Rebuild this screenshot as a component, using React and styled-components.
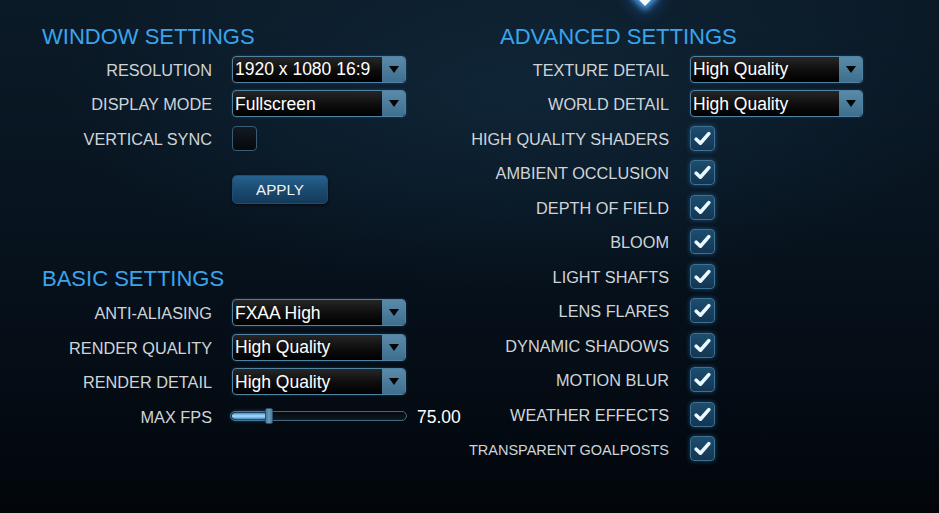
import React from 'react';
import styled, { createGlobalStyle } from 'styled-components';

const GlobalStyle = createGlobalStyle`
	html, body {
		margin: 0;
		padding: 0;
		background: #03080d;
	}
	* {
		box-sizing: border-box;
	}
`;

// Whole settings screen
const Page = styled.div`
	position: relative;
	width: 939px;
	height: 513px;
	overflow: hidden;
	display: flex;
	padding-top: 23px;
	font-family: 'Liberation Sans', Arial, sans-serif;
	background:
		radial-gradient(ellipse 70% 55% at 55% 18%, rgba(20, 48, 70, 0.55), rgba(20, 48, 70, 0) 70%),
		linear-gradient(180deg, #0b1a27 0%, #081521 35%, #050d16 70%, #02060b 100%);
`;

// Glowing tip of the tab marker at the top
const TabGlow = styled.div`
	position: absolute;
	left: 638px;
	top: -11px;
	width: 14px;
	height: 14px;
	transform: rotate(45deg);
	background: #f4fbff;
	box-shadow: 0 0 6px 3px rgba(90, 180, 255, 0.85), 0 0 16px 6px rgba(40, 120, 220, 0.45);
`;

const Column = styled.div`
	display: flex;
	flex-direction: column;
	flex: none;
	width: ${props => props.width}px;
	margin-left: ${props => props.offset}px;
`;

const Header = styled.h2`
	margin: ${props => props.top || 0}px 0 ${props => props.bottom || 0}px ${props => props.indent || 0}px;
	height: 24px;
	line-height: 24px;
	padding-top: 2px;
	font-size: 22px;
	font-weight: 400;
	color: #3aa4ee;
	white-space: nowrap;
`;

const Row = styled.div`
	display: flex;
	align-items: center;
	height: 34.5px;
	gap: ${props => props.gap}px;
`;

const Label = styled.div`
	flex: none;
	width: ${props => props.width}px;
	display: flex;
	justify-content: flex-end;
	padding-top: 2px;
	white-space: nowrap;
	font-size: ${props => (props.small ? '14.5px' : '16.3px')};
	color: #cfd4d8;
`;

// Dropdown
const Select = styled.div`
	display: flex;
	width: ${props => props.width}px;
	height: 27px;
	border: 1px solid #5282a2;
	border-radius: 4px;
	overflow: hidden;
	background: linear-gradient(180deg, #262626 0%, #0d0d0d 55%, #000 100%);
	box-shadow: 0 0 3px rgba(60, 130, 190, 0.35);
`;

const SelectValue = styled.div`
	flex: 1;
	display: flex;
	align-items: center;
	padding: 1px 0 0 2px;
	font-size: 17.5px;
	color: #ffffff;
	white-space: nowrap;
	overflow: hidden;
`;

const SelectArrow = styled.div`
	flex: none;
	width: 23px;
	display: flex;
	align-items: center;
	justify-content: center;
	background: linear-gradient(180deg, #5a8aaa 0%, #4c7d9d 50%, #3f6e8e 100%);
	&::after {
		content: '';
		width: 0;
		height: 0;
		border-left: 5px solid transparent;
		border-right: 5px solid transparent;
		border-top: 7px solid #050505;
	}
`;

// Checkbox
const Box = styled.div`
	width: 25px;
	height: 25px;
	display: flex;
	align-items: center;
	justify-content: center;
	border-radius: 4px;
	border: 1.5px solid ${props => (props.checked ? '#3f7192' : '#3a5c74')};
	background: ${props =>
		props.checked
			? 'linear-gradient(180deg, #1d4d6e 0%, #133652 100%)'
			: 'linear-gradient(180deg, #121a22 0%, #06090d 100%)'};
	box-shadow: ${props => (props.checked ? '0 0 5px rgba(50, 150, 230, 0.45)' : 'none')};
`;

const ApplyButton = styled.button`
	margin: 19.5px 0 0 190px;
	width: 96px;
	height: 29px;
	border: 1px solid #1d4e74;
	border-radius: 5px;
	background: linear-gradient(180deg, #26628f 0%, #1b4b70 50%, #143a5b 100%);
	color: #eef3f6;
	font-family: 'Liberation Sans', Arial, sans-serif;
	font-size: 15.2px;
	padding: 0 0 1px;
	box-shadow: 0 1px 3px rgba(0, 0, 0, 0.6);
`;

// Slider
const SliderWrap = styled.div`
	display: flex;
	align-items: center;
	margin-left: -2px;
`;

const Track = styled.div`
	position: relative;
	width: 177px;
	height: 10px;
	border-radius: 5px;
	border: 1px solid #44697f;
	background: linear-gradient(180deg, #050a0f 0%, #0f1a22 100%);
`;

const Fill = styled.div`
	position: absolute;
	left: 1px;
	top: 1px;
	bottom: 1px;
	border-radius: 4px;
	background: linear-gradient(180deg, #4a90c0 0%, #a8dcff 50%, #4a90c0 100%);
	box-shadow: 0 0 5px rgba(90, 180, 255, 0.8);
`;

const Thumb = styled.div`
	position: absolute;
	top: -4px;
	width: 8px;
	height: 16px;
	border-radius: 2px;
	background: linear-gradient(90deg, #4a7c9c 0%, #6b9aba 50%, #4a7c9c 100%);
	border: 1px solid #2e5068;
`;

const SliderValue = styled.div`
	margin-left: 10px;
	padding-top: 2px;
	font-size: 17.5px;
	color: #ffffff;
	white-space: nowrap;
`;

const Dropdown = ({ value, width }) => (
	<Select width={width}>
		<SelectValue>{value}</SelectValue>
		<SelectArrow />
	</Select>
);

const Checkbox = ({ checked }) => (
	<Box checked={checked}>
		{checked && (
			<svg width="17" height="15" viewBox="0 0 17 15">
				<path
					d="M2.2 8.2 L6.4 12.2 L14.8 2.6"
					fill="none"
					stroke="#eaf8ff"
					strokeWidth="3.6"
					strokeLinecap="round"
					strokeLinejoin="round"
				/>
			</svg>
		)}
	</Box>
);

const Slider = ({ value, percent }) => (
	<SliderWrap>
		<Track>
			<Fill style={{ width: `${percent}%` }} />
			<Thumb style={{ left: `calc(${percent}% - 1px)` }} />
		</Track>
		<SliderValue>{value.toFixed(2)}</SliderValue>
	</SliderWrap>
);

const windowRows = [
	{ label: 'RESOLUTION', type: 'select', value: '1920 x 1080 16:9' },
	{ label: 'DISPLAY MODE', type: 'select', value: 'Fullscreen' },
	{ label: 'VERTICAL SYNC', type: 'check', value: false },
];

const basicRows = [
	{ label: 'ANTI-ALIASING', type: 'select', value: 'FXAA High' },
	{ label: 'RENDER QUALITY', type: 'select', value: 'High Quality' },
	{ label: 'RENDER DETAIL', type: 'select', value: 'High Quality' },
];

const advancedRows = [
	{ label: 'TEXTURE DETAIL', type: 'select', value: 'High Quality' },
	{ label: 'WORLD DETAIL', type: 'select', value: 'High Quality' },
	{ label: 'HIGH QUALITY SHADERS', type: 'check', value: true },
	{ label: 'AMBIENT OCCLUSION', type: 'check', value: true },
	{ label: 'DEPTH OF FIELD', type: 'check', value: true },
	{ label: 'BLOOM', type: 'check', value: true },
	{ label: 'LIGHT SHAFTS', type: 'check', value: true },
	{ label: 'LENS FLARES', type: 'check', value: true },
	{ label: 'DYNAMIC SHADOWS', type: 'check', value: true },
	{ label: 'MOTION BLUR', type: 'check', value: true },
	{ label: 'WEATHER EFFECTS', type: 'check', value: true },
	{ label: 'TRANSPARENT GOALPOSTS', type: 'check', value: true, small: true },
];

const SettingRow = ({ row, labelWidth, gap, selectWidth }) => (
	<Row gap={gap}>
		<Label width={labelWidth} small={row.small}>
			{row.label}
		</Label>
		{row.type === 'select' ? (
			<Dropdown value={row.value} width={selectWidth} />
		) : (
			<Checkbox checked={row.value} />
		)}
	</Row>
);

const App = () => (
	<>
		<GlobalStyle />
		<Page>
			<TabGlow />
			<Column width={364} offset={42}>
				<Header bottom={5}>WINDOW SETTINGS</Header>
				{windowRows.map(row => (
					<SettingRow key={row.label} row={row} labelWidth={170} gap={20} selectWidth={174} />
				))}
				<div>
					<ApplyButton>APPLY</ApplyButton>
				</div>
				<Header top={61.4} bottom={6.35}>
					BASIC SETTINGS
				</Header>
				{basicRows.map(row => (
					<SettingRow key={row.label} row={row} labelWidth={170} gap={20} selectWidth={174} />
				))}
				<Row gap={20}>
					<Label width={170}>MAX FPS</Label>
					<Slider value={75} percent={20} />
				</Row>
			</Column>
			<Column width={420} offset={54}>
				<Header bottom={5} indent={40}>
					ADVANCED SETTINGS
				</Header>
				{advancedRows.map(row => (
					<SettingRow key={row.label} row={row} labelWidth={209} gap={21} selectWidth={173} />
				))}
			</Column>
		</Page>
	</>
);

export default App;
